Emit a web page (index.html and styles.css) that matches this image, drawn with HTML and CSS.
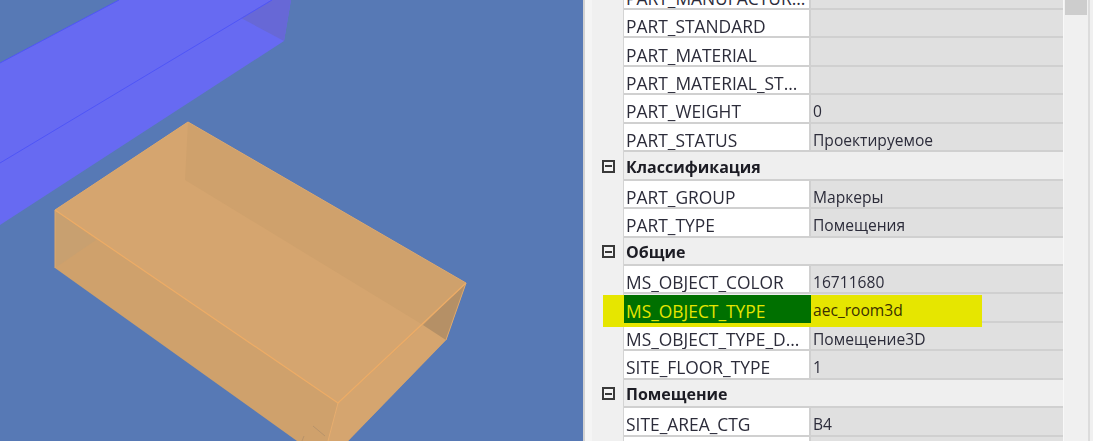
FILE: index.html
```html
<!DOCTYPE html>
<html lang="ru">
<head>
<meta charset="utf-8">
<title>Свойства объекта</title>
<link rel="stylesheet" href="styles.css">
</head>
<body>
<main class="app">
  <svg class="scene" viewBox="0 0 583 441" width="583" height="441" aria-label="3D вид">
    <rect width="583" height="441" fill="#5779b5"/>
    <polygon points="0,63 119,0 291,0 284,41 0,225" fill="#676af2"/>
    <polygon points="241,18 284,41 291,0 272,0" fill="#6768d6"/>
    <line x1="0" y1="163" x2="272" y2="0" stroke="#4f55f6" stroke-width="1"/>
    <line x1="0" y1="63" x2="119" y2="0" stroke="#4f55f6" stroke-width="1"/>
    <polygon points="188,122 466,283 446,340 348,441 297,441 55,268 55,210" fill="#cfa16c"/>
    <polygon points="188,122 185,180 423,325 338,403 55,210" fill="#d5a56f"/>
    <polygon points="338,403 423,325 446,340 348,441 328,441" fill="#d5a56f"/>
    <polygon points="423,325 466,283 446,340" fill="#b59066"/>
    <polygon points="55,210 96,240 55,268" fill="#c8a070"/>
    <polyline points="55,210 338,403 466,283" fill="none" stroke="#edac66" stroke-width="1.2"/>
    <line x1="338" y1="403" x2="328" y2="441" stroke="#e6ad6f" stroke-width="1"/>
    <polyline points="55,268 55,210 188,122 466,283 446,340" fill="none" stroke="#dca86e" stroke-width="1"/>
    <path d="M313 426l12 10M304 436l-2 5" fill="none" stroke="#b8936a" stroke-width="1"/>
  </svg>
  <div class="divider"></div>
  <section class="props">
    <div class="table">
      <div class="row"><div class="gutter"></div><div class="name">PART_MANUFACTUR...</div><div class="val"></div></div>
      <div class="row"><div class="gutter"></div><div class="name">PART_STANDARD</div><div class="val"></div></div>
      <div class="row"><div class="gutter"></div><div class="name">PART_MATERIAL</div><div class="val"></div></div>
      <div class="row"><div class="gutter"></div><div class="name">PART_MATERIAL_ST...</div><div class="val"></div></div>
      <div class="row"><div class="gutter"></div><div class="name">PART_WEIGHT</div><div class="val"><span>0</span></div></div>
      <div class="row"><div class="gutter"></div><div class="name">PART_STATUS</div><div class="val"><span>Проектируемое</span></div></div>
      <div class="row section"><div class="gutter"><i class="toggle"></i></div><div class="title">Классификация</div></div>
      <div class="row"><div class="gutter"></div><div class="name">PART_GROUP</div><div class="val"><span>Маркеры</span></div></div>
      <div class="row"><div class="gutter"></div><div class="name">PART_TYPE</div><div class="val"><span>Помещения</span></div></div>
      <div class="row section"><div class="gutter"><i class="toggle"></i></div><div class="title">Общие</div></div>
      <div class="row"><div class="gutter"></div><div class="name">MS_OBJECT_COLOR</div><div class="val"><span>16711680</span></div></div>
      <div class="row marked"><div class="gutter"></div><div class="name">MS_OBJECT_TYPE</div><div class="val"><span>aec_room3d</span></div></div>
      <div class="row"><div class="gutter"></div><div class="name">MS_OBJECT_TYPE_D...</div><div class="val"><span>Помещение3D</span></div></div>
      <div class="row"><div class="gutter"></div><div class="name">SITE_FLOOR_TYPE</div><div class="val"><span>1</span></div></div>
      <div class="row section"><div class="gutter"><i class="toggle"></i></div><div class="title">Помещение</div></div>
      <div class="row"><div class="gutter"></div><div class="name">SITE_AREA_CTG</div><div class="val"><span>B4</span></div></div>
      <div class="row"><div class="gutter"></div><div class="name"></div><div class="val"></div></div>
    </div>
    <div class="scrollbar"><div class="thumb"></div></div>
    <div class="edge"></div>
  </section>
</main>
</body>
</html>
```
FILE: styles.css
```css
html, body {
  margin: 0;
  height: 100%;
  overflow: hidden;
  background: #f0f0f0;
}
.app {
  display: flex;
  width: 1093px;
  height: 441px;
  overflow: hidden;
}
.scene {
  display: block;
  flex: none;
  filter: blur(0.4px);
}
.divider {
  flex: none;
  width: 9px;
  box-sizing: border-box;
  background: #f5f5f5;
  border-left: 2px solid #d2d2d2;
}
.props {
  flex: none;
  display: flex;
  width: 501px;
  height: 441px;
  overflow: hidden;
}
.table {
  flex: none;
  width: 471px;
  margin-top: -18.4px;
  font: 15.6px/1 "Open Sans", Arial, sans-serif;
  color: #2c2c3a;
  filter: blur(0.3px);
}
.row {
  display: grid;
  grid-template-columns: 32px 187px 252px;
  height: 28.44px;
  box-sizing: border-box;
}
.gutter {
  display: flex;
  align-items: center;
  background: #f0f0f0;
  border-right: 1px solid #d4d4d4;
  padding-left: 10px;
}
.name, .val, .title {
  display: flex;
  align-items: center;
  white-space: nowrap;
  overflow: hidden;
  box-sizing: border-box;
  border-bottom: 2px solid #d0d0d0;
  padding-top: 7px;
}
.name {
  background: #fff;
  font-size: 17.4px;
  padding-left: 2px;
  border-right: 2px solid #d0d0d0;
}
.val {
  background: #e0e0e0;
  padding-left: 2px;
}
.section .title {
  grid-column: 2 / 4;
  background: #efefef;
  font-weight: 700;
  font-size: 16px;
  color: #1c1c24;
  padding-left: 2px;
  padding-top: 3px;
}
.toggle {
  position: relative;
  display: block;
  width: 13px;
  height: 13px;
  box-sizing: border-box;
  border: 2px solid #3a3a3a;
  background: #f4f4f4;
}
.toggle::after {
  content: "";
  position: absolute;
  left: 1px;
  right: 1px;
  top: 3.5px;
  height: 2px;
  background: #3a3a3a;
}
.marked {
  position: relative;
  z-index: 1;
}
.marked::before {
  content: "";
  position: absolute;
  left: 11px;
  top: 1px;
  width: 379px;
  height: 32px;
  background: #e6e600;
}
.marked .name {
  position: relative;
  z-index: 1;
  background: #007000;
  color: #e6e600;
  border-right: 0;
  border-bottom: 0;
  margin-top: 1px;
  padding-top: 6px;
}
.marked .val span {
  position: relative;
  z-index: 1;
  color: #3a3000;
}
.scrollbar {
  flex: none;
  width: 25px;
  padding: 0 1px 0 1px;
  box-sizing: border-box;
  background: #f0f0f0;
  border-left: 1px solid #f8f8f8;
}
.thumb {
  height: 15px;
  background: #cdcdcd;
}
.edge {
  flex: none;
  width: 5px;
  box-sizing: border-box;
  background: #f0f0f0;
  border-left: 2px solid #dcdcdc;
}
```
